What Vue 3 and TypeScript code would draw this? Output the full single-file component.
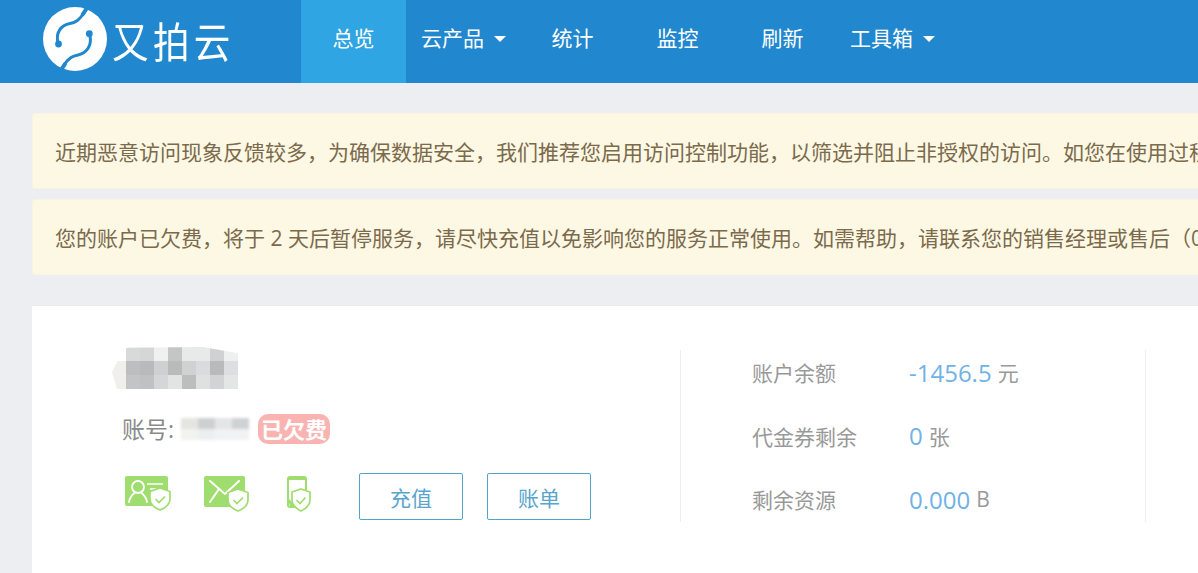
<script setup lang="ts">
const navItems = [
  { label: '总览', active: true },
  { label: '云产品', caret: true },
  { label: '统计' },
  { label: '监控' },
  { label: '刷新' },
  { label: '工具箱', caret: true },
]
const notices = [
  '近期恶意访问现象反馈较多，为确保数据安全，我们推荐您启用访问控制功能，以筛选并阻止非授权的访问。如您在使用过程',
  '您的账户已欠费，将于 2 天后暂停服务，请尽快充值以免影响您的服务正常使用。如需帮助，请联系您的销售经理或售后（0',
]
const mosaic = [
  '#ffffff', '#d8d9d9', '#d5d6d6', '#f0f0f0', '#c4c6c6', '#e8e9e9', '#e8e9e9', '#d0d1d2', '#eeefef',
  '#f0efed', '#bdbebf', '#b9babb', '#cfd0d1', '#b9baba', '#d0d2d2', '#dadbdc', '#b9baba', '#dcdedf',
  '#f0efed', '#c3c4c5', '#c0c1c2', '#d5d6d7', '#e2e3e3', '#bcbdbd', '#dfe0e0', '#d2d3d4', '#e4e5e5',
]
const acctMosaic = ['#e4e4e0', '#cdd0d2', '#e3e6e7', '#cfd2d4', '#f2f2f1', '#eceef0', '#f0f2f3', '#f1f2f3']
const stats = [
  { label: '账户余额', value: '-1456.5', unit: '元' },
  { label: '代金券剩余', value: '0', unit: '张' },
  { label: '剩余资源', value: '0.000', unit: 'B' },
]
</script>

<template>
  <div class="page">
    <header class="nav">
      <div class="brand">
        <svg class="mark" viewBox="0 0 64 64" aria-hidden="true">
          <circle cx="32" cy="32" r="32" fill="#fff" />
          <g fill="none" stroke="#2187ce" stroke-linecap="round">
            <path d="M15.3 36.7 C12 26 18 18 27 16.5 C33 15.5 36 13 41 6" stroke-width="3" />
            <path d="M46.3 26.7 C50 38 44 46 35 48 C29 49 26 51 21 58" stroke-width="3" />
            <path d="M40 7 L46 -2 M22 57 L16 66" stroke-width="4" />
          </g>
          <circle cx="15.5" cy="37" r="3.4" fill="#2187ce" />
          <circle cx="46.3" cy="26.7" r="3.4" fill="#2187ce" />
        </svg>
        <span class="brand-name">又拍云</span>
      </div>
      <nav class="menu">
        <a v-for="item in navItems" :key="item.label" class="menu-item" :class="{ active: item.active, drop: item.caret }">
          {{ item.label }}<i v-if="item.caret" class="caret"></i>
        </a>
      </nav>
    </header>

    <main class="content">
      <div v-for="n in notices" :key="n" class="notice">{{ n }}</div>

      <section class="card">
        <div class="profile">
          <div class="name-mosaic">
            <i v-for="(c, i) in mosaic" :key="i" :style="{ background: c }"></i>
          </div>
          <div class="account">
            <span class="acct-label">账号:</span>
            <span class="acct-mosaic">
              <i v-for="(c, i) in acctMosaic" :key="i" :style="{ background: c }"></i>
            </span>
            <span class="badge">已欠费</span>
          </div>
          <div class="actions">
            <div class="verify">
              <svg class="v-icon" viewBox="0 0 48 36" aria-hidden="true">
                <rect x="0" y="0" width="43" height="30" rx="2" fill="#a0dd6f" />
                <circle cx="13" cy="11" r="6" fill="none" stroke="#fff" stroke-width="1.8" />
                <path d="M4 26 C5 20 8 18 10 16.5 M22 26 C21 20 18 18 16 16.5" fill="none" stroke="#fff" stroke-width="1.8" stroke-linecap="round" />
                <path d="M22 8 H38 M25 13 H31" stroke="#fff" stroke-width="1.6" />
                <path d="M35 12 L45 15.5 V23 C45 28 40 32 35 34 C30 32 25 28 25 23 V15.5 Z" fill="#fff" stroke="#a0dd6f" stroke-width="1.7" />
                <path d="M30.5 23 L34 26.5 L40 20.5" fill="none" stroke="#a0dd6f" stroke-width="1.7" />
              </svg>
              <svg class="v-icon" viewBox="0 0 48 36" aria-hidden="true">
                <rect x="0" y="0" width="41" height="31" rx="2" fill="#a0dd6f" />
                <path d="M6 5 L21 18 L35 5 M6 26 L15 13" fill="none" stroke="#fff" stroke-width="2" stroke-linecap="round" />
                <path d="M34 13 L44 16.5 V24 C44 29 39 33 34 35 C29 33 24 29 24 24 V16.5 Z" fill="#fff" stroke="#a0dd6f" stroke-width="1.7" />
                <path d="M29.5 24 L33 27.5 L39 21.5" fill="none" stroke="#a0dd6f" stroke-width="1.7" />
              </svg>
              <svg class="v-icon phone" viewBox="0 0 26 36" aria-hidden="true">
                <rect x="1" y="1" width="18" height="30" rx="2" fill="#fff" stroke="#a0dd6f" stroke-width="2" />
                <rect x="1" y="1" width="18" height="3" fill="#a0dd6f" />
                <path d="M1 22 L7 28 V31 H3 Z" fill="#a0dd6f" />
                <path d="M14 13 L23 16 V24 C23 29 18 33 14 35 C10 33 5 29 5 24 V16 Z" fill="#fff" stroke="#a0dd6f" stroke-width="1.7" />
                <path d="M9.5 24 L13 27.5 L18.5 21.5" fill="none" stroke="#a0dd6f" stroke-width="1.7" />
              </svg>
            </div>
            <button class="btn">充值</button>
            <button class="btn">账单</button>
          </div>
        </div>
        <div class="stats">
          <div v-for="s in stats" :key="s.label" class="stat">
            <span class="stat-label">{{ s.label }}</span>
            <span class="stat-value">{{ s.value }}</span>
            <span class="stat-unit">{{ s.unit }}</span>
          </div>
        </div>
      </section>
    </main>
  </div>
</template>

<style>
html, body { margin: 0; background: #eceef2; overflow: hidden; }
</style>

<style scoped>
.page {
  width: 1198px;
  height: 573px;
  overflow: hidden;
  background: #eceef2;
  font-family: "Open Sans", "Noto Sans CJK SC", sans-serif;
  font-size: 21px;
}
.nav {
  height: 83px;
  background: #2187ce;
  display: flex;
  color: #fff;
}
.brand {
  width: 301px;
  display: flex;
  align-items: center;
  padding-left: 43px;
  box-sizing: border-box;
  gap: 5px;
}
.mark { width: 64px; height: 64px; margin-top: -6px; flex: none; }
.brand-name {
  font-size: 42px;
  font-family: "Noto Sans CJK SC", sans-serif;
  font-weight: 400;
  letter-spacing: 5px;
  margin-top: -5px;
  transform: scaleX(0.87);
  transform-origin: left center;
  white-space: nowrap;
}
.menu { display: flex; }
.menu-item {
  width: 105px;
  display: flex;
  align-items: center;
  justify-content: center;
  padding-bottom: 9px;
  box-sizing: border-box;
  height: 83px;
  white-space: nowrap;
}
.menu-item.drop { width: auto; padding-left: 15px; padding-right: 14px; }
.menu-item.active { background: #2fa5e3; }
.caret {
  width: 0;
  height: 0;
  border: 6px solid transparent;
  border-top: 6px solid #fff;
  border-bottom: 0;
  margin-left: 10px;
  margin-top: 3px;
}
.content {
  padding: 30px 0 0 32px;
  display: flex;
  flex-direction: column;
}
.notice {
  width: 1400px;
  height: 76px;
  line-height: 76px;
  box-sizing: border-box;
  padding-left: 22px;
  margin-bottom: 10px;
  background: #fdf8e4;
  border: 1px solid #f9f3df;
  border-radius: 3px;
  color: #7b6a4c;
  white-space: nowrap;
  overflow: hidden;
}
.card {
  margin-top: 21px;
  width: 1400px;
  height: 300px;
  background: #fff;
  box-shadow: 0 -1px 0 #e9eaec;
  box-sizing: border-box;
  display: flex;
  padding-top: 41px;
}
.profile {
  width: 648px;
  box-sizing: border-box;
  padding-left: 80px;
}
.name-mosaic {
  width: 126px;
  height: 42px;
  display: grid;
  grid-template-columns: repeat(9, 14px);
  grid-auto-rows: 14px;
  filter: blur(0.6px);
  clip-path: polygon(8% 12%, 12% 2%, 72% 0, 100% 15%, 100% 100%, 4% 100%, 0 60%);
}
.name-mosaic i, .acct-mosaic i { display: block; }
.account {
  display: flex;
  align-items: center;
  margin: 25px 0 0 10px;
  height: 30px;
  color: #8a8a8a;
}
.acct-label { font-size: 23px; margin-top: -2px; }
.acct-mosaic {
  width: 68px;
  height: 22px;
  margin: 0 9px 0 7px;
  display: grid;
  grid-template-columns: repeat(4, 17px);
  grid-auto-rows: 11px;
  filter: blur(1.5px);
}
.badge {
  background: #f9b4b1;
  color: #fff;
  font-size: 22px;
  font-weight: 700;
  border-radius: 10px;
  line-height: 30px;
  height: 30px;
  padding: 0 3px;
  white-space: nowrap;
}
.actions {
  display: flex;
  align-items: flex-start;
  margin-top: 29px;
  padding-left: 13px;
}
.verify {
  display: grid;
  grid-template-columns: 79px 83px auto;
  width: 234px;
  padding-top: 3px;
  box-sizing: border-box;
}
.v-icon { width: 48px; height: 36px; display: block; }
.phone { width: 26px; }
.btn {
  width: 104px;
  height: 47px;
  margin-right: 24px;
  background: #fff;
  border: 1px solid #4fa5cb;
  border-radius: 2px;
  color: #5aa5cb;
  font: inherit;
  padding: 0;
}
.stats {
  width: 466px;
  height: 172px;
  margin-top: 3px;
  border-left: 1px solid #eceef0;
  border-right: 1px solid #eceef0;
  box-sizing: border-box;
  padding: 4px 0 0 71px;
  display: flex;
  flex-direction: column;
  gap: 27.5px;
}
.stat {
  height: 36px;
  display: flex;
  align-items: center;
  color: #999;
}
.stat-label { width: 157px; }
.stat-value { color: #70b2e6; font-size: 24px; margin-right: 6px; }
</style>
